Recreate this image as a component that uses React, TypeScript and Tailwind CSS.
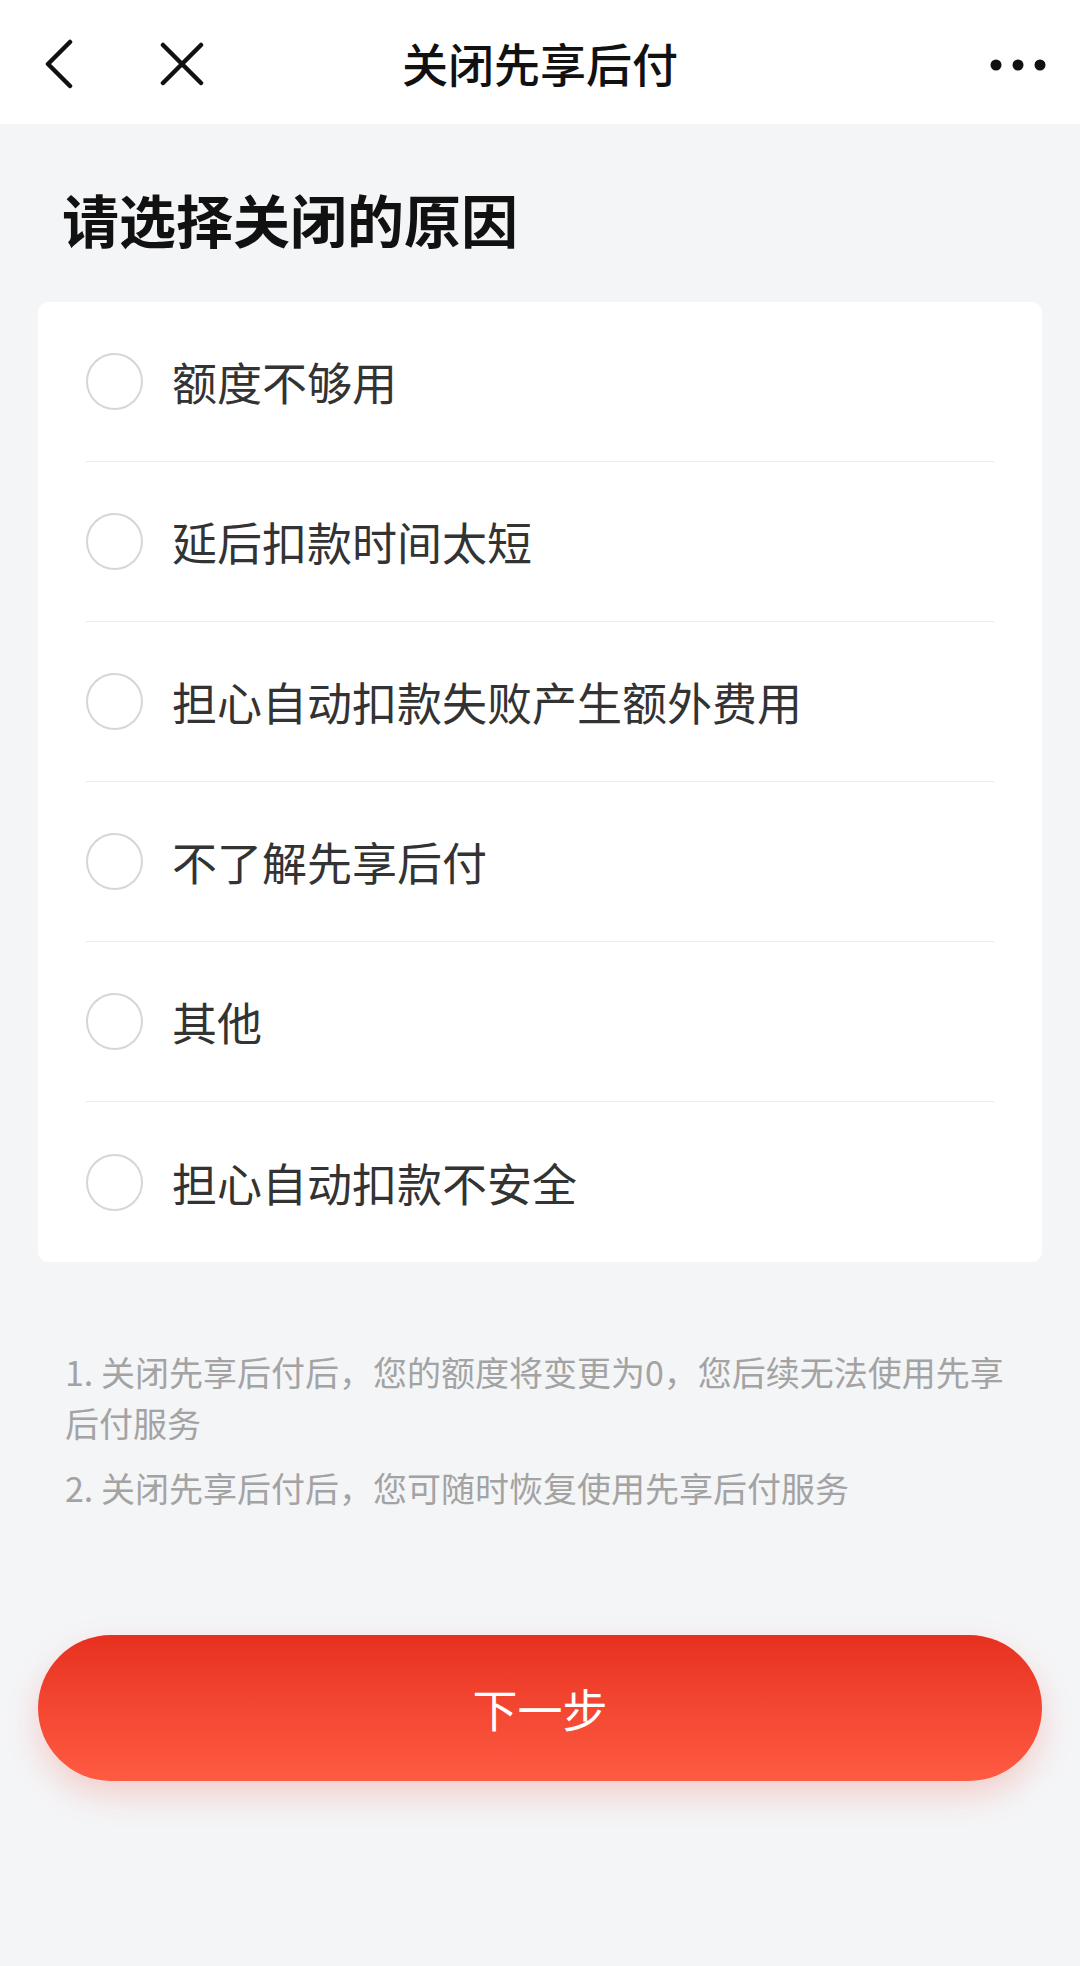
const reasons = [
  "额度不够用",
  "延后扣款时间太短",
  "担心自动扣款失败产生额外费用",
  "不了解先享后付",
  "其他",
  "担心自动扣款不安全",
];

const font = { fontFamily: '"Noto Sans CJK SC", "Noto Sans", sans-serif' };

function BackIcon() {
  return (
    <svg width="30" height="50" viewBox="0 0 30 50" fill="none">
      <path d="M26 3 L4 25 L26 47" stroke="#111" strokeWidth="4.5" strokeLinecap="round" strokeLinejoin="round" />
    </svg>
  );
}

function CloseIcon() {
  return (
    <svg width="44" height="44" viewBox="0 0 44 44" fill="none">
      <path d="M3 3 L41 41 M41 3 L3 41" stroke="#111" strokeWidth="4.5" strokeLinecap="round" />
    </svg>
  );
}

function MoreIcon() {
  return (
    <svg width="56" height="12" viewBox="0 0 56 12" fill="#111">
      <circle cx="6" cy="6" r="5.5" />
      <circle cx="28" cy="6" r="5.5" />
      <circle cx="50" cy="6" r="5.5" />
    </svg>
  );
}

export default function App() {
  return (
    <div className="min-h-[1966px] bg-[#f4f5f7]" style={font}>
      {/* Top bar */}
      <div className="h-[124px] bg-white grid grid-cols-[1fr_auto_1fr] items-center">
        <div className="flex items-center pl-[44px] gap-[86px] pt-[4px]">
          <BackIcon />
          <CloseIcon />
        </div>
        <div className="text-[46px] font-medium text-[#111] leading-none">关闭先享后付</div>
        <div className="flex justify-end pr-[34px] pt-[6px]">
          <MoreIcon />
        </div>
      </div>

      {/* Heading */}
      <h1 className="mt-[64px] ml-[62px] text-[57px] font-bold text-[#111] leading-[60px]">
        请选择关闭的原因
      </h1>

      {/* Reasons card */}
      <div className="mt-[54px] mx-[38px] bg-white rounded-[10px]">
        {reasons.map((r, i) => (
          <div key={r} className="px-[48px]">
            <div
              className={`h-[160px] flex items-center gap-[29px] ${
                i < reasons.length - 1 ? "border-b border-[#ededed]" : ""
              }`}
            >
              <div className="w-[57px] h-[57px] rounded-full border-[2.5px] border-[#d6d6d6] shrink-0" />
              <span className="text-[45px] text-[#333] leading-none">{r}</span>
            </div>
          </div>
        ))}
      </div>

      {/* Notes */}
      <div className="mt-[84px] pl-[65px] pr-[58px] text-[34px] leading-[51px] text-[#a3a3a3] flex flex-col gap-[14px]">
        <p>1. 关闭先享后付后，您的额度将变更为0，您后续无法使用先享后付服务</p>
        <p>2. 关闭先享后付后，您可随时恢复使用先享后付服务</p>
      </div>

      {/* Next button */}
      <div className="mt-[122px] px-[38px]">
        <button className="w-full h-[146px] rounded-full bg-gradient-to-b from-[#e7301f] to-[#ff5a42] text-white text-[45px] leading-none shadow-[0_14px_32px_rgba(240,70,50,0.22)]">
          下一步
        </button>
      </div>
    </div>
  );
}
